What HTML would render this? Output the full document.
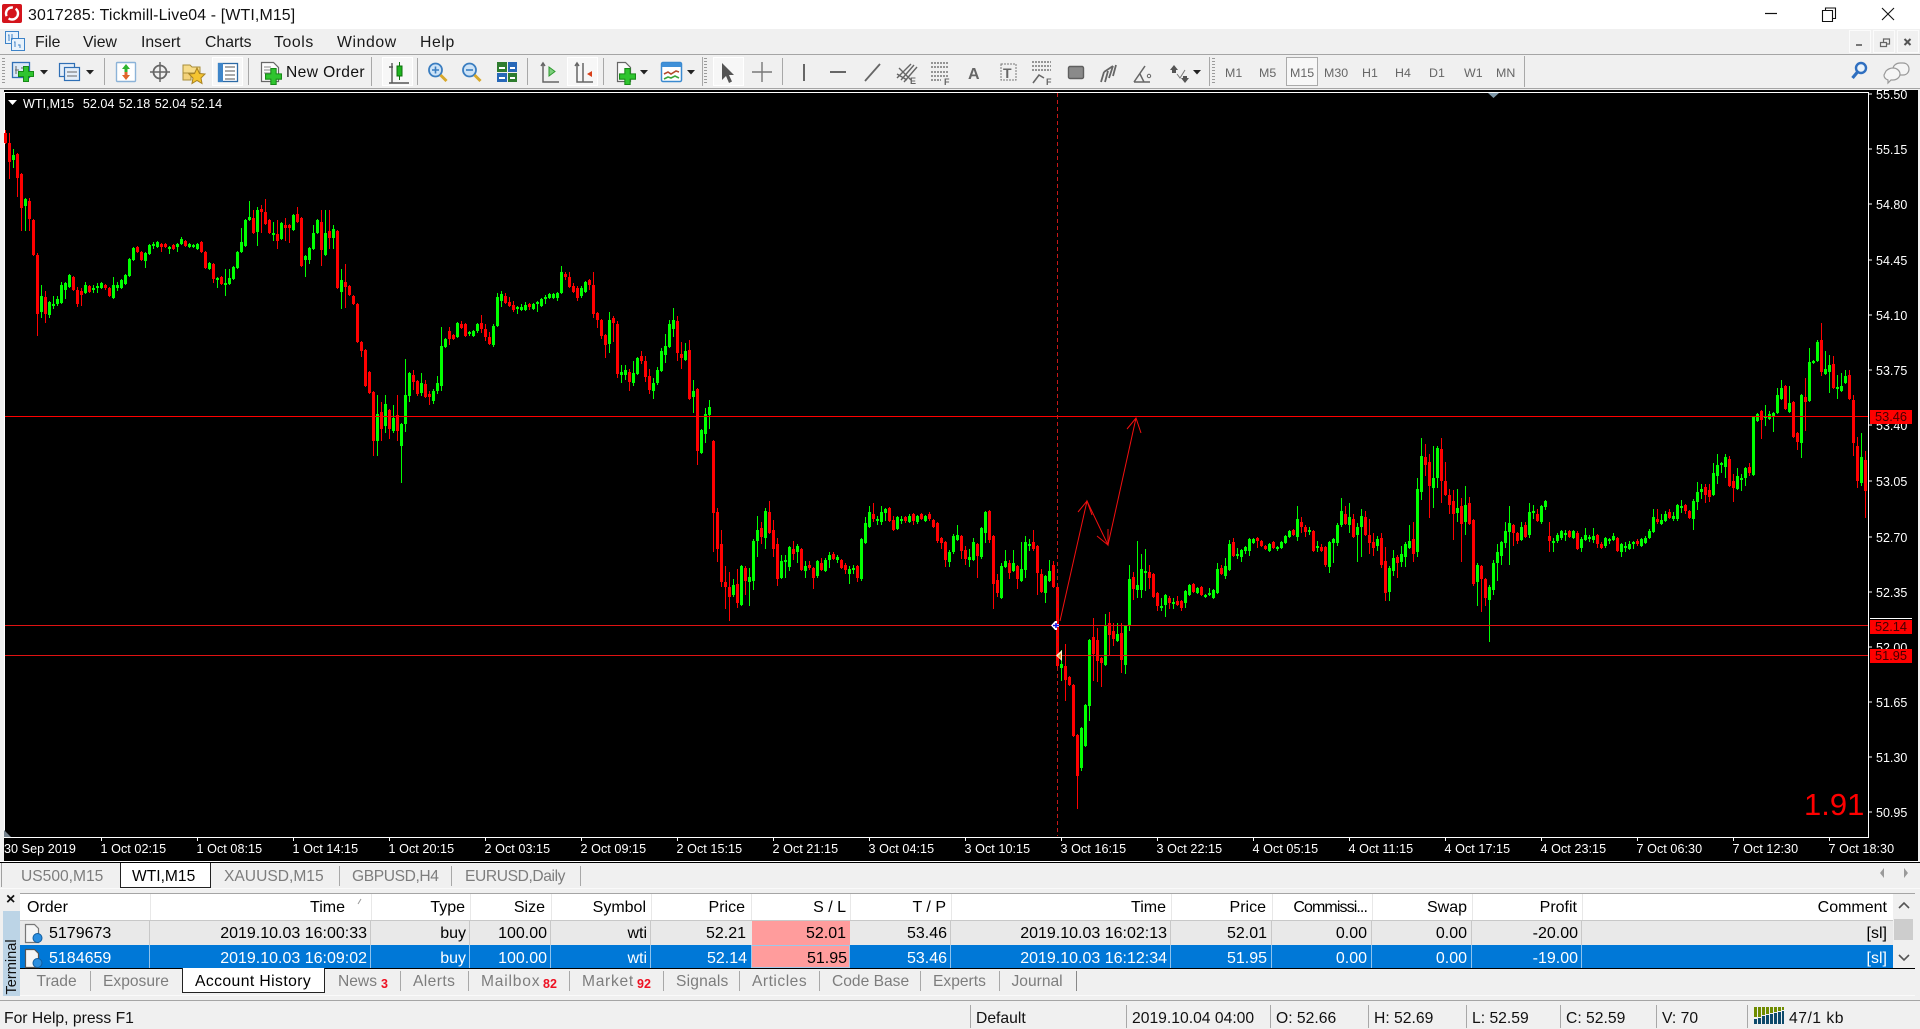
<!DOCTYPE html>
<html><head><meta charset="utf-8"><title>3017285: Tickmill-Live04 - [WTI,M15]</title>
<style>
html,body{margin:0;padding:0;width:1920px;height:1028px;overflow:hidden;background:#f0f0f0;font-family:"Liberation Sans",sans-serif;color:#000}
.b{position:absolute}
.t{position:absolute;white-space:nowrap;line-height:20px;height:20px;font-size:15.7px;margin-top:1px}
.m{font-size:15.8px;top:32px;color:#1a1a1a}
.a{font-size:12.6px;letter-spacing:.05px;color:#fff;top:838px}
.p{font-size:12.5px;color:#fff;left:1876px}
.g{color:#7d7d7d;font-size:15.6px}
.c{font-size:16px;text-align:right}
.h{top:897px}.r1{top:923px}.r2{top:948px;color:#fff}
.s{top:1008px;font-size:15.7px;color:#111}
.f{font-size:12.4px;color:#666;top:62px;font-weight:normal}
.tag{position:absolute;left:1870px;width:42px;height:14px;background:#f00;color:#400;font-size:12.8px;line-height:14px;text-align:center}
.n{color:#ee1122;font-size:12.5px;font-weight:bold}
.v{position:absolute;width:1px;background:#a8a8a8}
</style></head><body>

<!-- title bar -->
<div class="b" style="left:0;top:0;width:1920px;height:29px;background:#fff"></div>
<div class="t" style="left:28px;top:5px;font-size:15.9px;letter-spacing:.14px;color:#111">3017285: Tickmill-Live04 - [WTI,M15]</div>

<!-- menu -->
<div class="t m" style="left:35px">File</div>
<div class="t m" style="left:83px">View</div>
<div class="t m" style="left:141px">Insert</div>
<div class="t m" style="left:205px">Charts</div>
<div class="t m" style="left:274px;letter-spacing:.6px">Tools</div>
<div class="t m" style="left:337px;letter-spacing:.6px">Window</div>
<div class="t m" style="left:420px;letter-spacing:.6px">Help</div>

<!-- toolbar rows -->
<div class="b" style="left:0;top:54px;width:1920px;height:1px;background:#a5a5a5"></div>
<div class="b" style="left:0;top:88px;width:1920px;height:1px;background:#a5a5a5"></div>
<div class="b" style="left:212px;top:57px;width:31px;height:29px;background:#f7f7f7;border:1px solid #fff;box-sizing:border-box"></div>
<div class="b" style="left:382px;top:57px;width:31px;height:29px;background:#f7f7f7;border:1px solid #fff;box-sizing:border-box"></div>
<div class="b" style="left:567px;top:57px;width:31px;height:29px;background:#f7f7f7;border:1px solid #fff;box-sizing:border-box"></div>
<div class="b" style="left:713px;top:57px;width:31px;height:29px;background:#f7f7f7;border:1px solid #fff;box-sizing:border-box"></div>
<div class="b" style="left:1286px;top:57px;width:32px;height:29px;background:#f7f7f7;border:1px solid #aaa;box-sizing:border-box"></div>
<div class="t" style="left:286px;top:62px;font-size:15.6px;letter-spacing:.4px;color:#111">New Order</div>
<div class="t f" style="left:1225px">M1</div>
<div class="t f" style="left:1259px">M5</div>
<div class="t f" style="left:1290px">M15</div>
<div class="t f" style="left:1324px">M30</div>
<div class="t f" style="left:1362px">H1</div>
<div class="t f" style="left:1395px">H4</div>
<div class="t f" style="left:1429px">D1</div>
<div class="t f" style="left:1464px">W1</div>
<div class="t f" style="left:1496px">MN</div>

<!-- chart -->
<div class="b" style="left:4px;top:90px;width:1914px;height:771px;background:#000"></div>
<svg id="ch" class="b" style="left:0;top:0" width="1920" height="1028" xmlns="http://www.w3.org/2000/svg">
<g shape-rendering="crispEdges">
<path d="M4 92.5H1868.5V837.5H4.5V92" fill="none" stroke="#fff" stroke-width="1"/>
<path d="M1869 94h3M1869 149h3M1869 204h3M1869 260h3M1869 315h3M1869 370h3M1869 425h3M1869 481h3M1869 537h3M1869 592h3M1869 647h3M1869 702h3M1869 757h3M1869 812h3" stroke="#fff" stroke-width="1"/>
<path d="M101 838v3M197 838v3M293 838v3M389 838v3M485 838v3M581 838v3M677 838v3M773 838v3M869 838v3M965 838v3M1061 838v3M1157 838v3M1253 838v3M1349 838v3M1445 838v3M1541 838v3M1637 838v3M1733 838v3M1829 838v3" stroke="#fff" stroke-width="1" transform="translate(.5,0)"/>
</g>
<g id="cd" shape-rendering="crispEdges"></g>
<g shape-rendering="crispEdges">
<path d="M5 416.5H1868" stroke="#f00" stroke-width="1"/>
<path d="M5 625.5H1868M5 655.5H1868" stroke="#e01212" stroke-width="1"/>
<path d="M1057.5 93V836" stroke="#c81818" stroke-width="1" stroke-dasharray="4 3"/>
</g>
<g fill="none" stroke="#f41010" stroke-width="1">
<path d="M1060 621L1087 501L1108 545L1136 418"/>
<path d="M1078 512L1087 501L1092 515M1097 536L1108 545L1108 529M1127 429L1136 418L1141 433"/>
</g>
<path d="M1051 625.5L1055 621h2v3h2v3h-2v3h-2z" fill="#fff"/>
<path d="M1053 625.5h6M1056 623v5" stroke="#1414e0" stroke-width="1.6"/>
<path d="M1062 650v11l-6-5.5z" fill="#f6f0d0"/><path d="M1061 653v6l-3-3z" fill="#e39a2a"/>
<path d="M1488 93h11l-5.5 5z" fill="#7f98a9"/>
<path d="M4 830v7h7z" fill="#75828c"/>
<path d="M8 100h9l-4.5 5z" fill="#fff"/>
</svg>

<div class="t" style="left:23px;top:93px;font-size:12.6px;color:#fff;word-spacing:.9px">WTI,M15&nbsp; 52.04 52.18 52.04 52.14</div>

<div class="t p" style="top:84px">55.50</div>
<div class="t p" style="top:139px">55.15</div>
<div class="t p" style="top:194px">54.80</div>
<div class="t p" style="top:250px">54.45</div>
<div class="t p" style="top:305px">54.10</div>
<div class="t p" style="top:360px">53.75</div>
<div class="t p" style="top:415px">53.40</div>
<div class="t p" style="top:471px">53.05</div>
<div class="t p" style="top:527px">52.70</div>
<div class="t p" style="top:582px">52.35</div>
<div class="t p" style="top:637px">52.00</div>
<div class="t p" style="top:692px">51.65</div>
<div class="t p" style="top:747px">51.30</div>
<div class="t p" style="top:802px">50.95</div>
<div class="tag" style="top:410px">53.46</div>
<div class="b" style="left:1870px;top:618px;width:42px;height:1px;background:#fff"></div>
<div class="tag" style="top:620px">52.14</div>
<div class="tag" style="top:649px">51.95</div>
<div class="t" style="left:1804px;top:792px;font-size:31px;line-height:24px;height:24px;color:#f00">1.91</div>

<div class="t a" style="left:4px">30 Sep 2019</div>
<div class="t a" style="left:100.5px">1 Oct 02:15</div>
<div class="t a" style="left:196.5px">1 Oct 08:15</div>
<div class="t a" style="left:292.5px">1 Oct 14:15</div>
<div class="t a" style="left:388.5px">1 Oct 20:15</div>
<div class="t a" style="left:484.5px">2 Oct 03:15</div>
<div class="t a" style="left:580.5px">2 Oct 09:15</div>
<div class="t a" style="left:676.5px">2 Oct 15:15</div>
<div class="t a" style="left:772.5px">2 Oct 21:15</div>
<div class="t a" style="left:868.5px">3 Oct 04:15</div>
<div class="t a" style="left:964.5px">3 Oct 10:15</div>
<div class="t a" style="left:1060.5px">3 Oct 16:15</div>
<div class="t a" style="left:1156.5px">3 Oct 22:15</div>
<div class="t a" style="left:1252.5px">4 Oct 05:15</div>
<div class="t a" style="left:1348.5px">4 Oct 11:15</div>
<div class="t a" style="left:1444.5px">4 Oct 17:15</div>
<div class="t a" style="left:1540.5px">4 Oct 23:15</div>
<div class="t a" style="left:1636.5px">7 Oct 06:30</div>
<div class="t a" style="left:1732.5px">7 Oct 12:30</div>
<div class="t a" style="left:1828.5px">7 Oct 18:30</div>

<!-- chart tabs -->
<div class="b" style="left:0;top:861px;width:1918px;height:1px;background:#fff"></div>
<div class="b" style="left:0;top:862px;width:1920px;height:1px;background:#000"></div>
<div class="b" style="left:0;top:888px;width:1920px;height:1px;background:#fafafa"></div>
<div class="b" style="left:1px;top:863px;width:1px;height:24px;background:#a0a0a0"></div>
<div class="b" style="left:120px;top:863px;width:91px;height:25px;background:#fff;border-left:1px solid #222;border-right:1px solid #222;border-bottom:1px solid #222;box-sizing:border-box"></div>
<div class="t g" style="left:21px;top:866px">US500,M15</div>
<div class="t" style="left:132px;top:866px;font-size:15.6px">WTI,M15</div>
<div class="t g" style="left:224px;top:866px">XAUUSD,M15</div>
<div class="v" style="left:339px;top:866px;height:20px"></div>
<div class="t g" style="left:352px;top:866px;letter-spacing:-.4px">GBPUSD,H4</div>
<div class="v" style="left:451px;top:866px;height:20px"></div>
<div class="t g" style="left:465px;top:866px;letter-spacing:-.4px">EURUSD,Daily</div>
<div class="v" style="left:580px;top:866px;height:20px"></div>

<!-- terminal -->
<div class="t" style="left:6px;top:889px;font-size:16px;color:#111;font-weight:bold">×</div>
<div class="b" style="left:3px;top:911px;width:17px;height:85px;background:#bcd4e6"></div>
<div class="t" style="left:-18px;top:956px;width:60px;font-size:14.6px;transform:rotate(-90deg);color:#111;text-align:center">Terminal</div>
<div class="b" style="left:20px;top:893px;width:1895px;height:1px;background:#a5a5a5"></div>
<div class="b" style="left:20px;top:894px;width:1873px;height:26px;background:#fff"></div>
<div class="b" style="left:20px;top:920px;width:1873px;height:1px;background:#c8c8c8"></div>
<div class="b" style="left:20px;top:921px;width:1873px;height:24px;background:#e9e9e9"></div>
<div class="b" style="left:20px;top:945px;width:1873px;height:23px;background:#0078d7"></div>
<div class="b" style="left:20px;top:968px;width:1895px;height:1px;background:#000"></div>
<div class="b" style="left:752px;top:921px;width:98px;height:24px;background:#ff9c9c"></div>
<div class="b" style="left:751px;top:945px;width:99px;height:23px;background:#ff9c9c;border:1px solid #9cc8ea;box-sizing:border-box"></div>
<!-- column dividers -->
<svg class="b" style="left:0;top:0" width="1920" height="1028" shape-rendering="crispEdges">
<path d="M150.5 894v26M371.5 894v26M470.5 894v26M551.5 894v26M651.5 894v26M751.5 894v26M850.5 894v26M951.5 894v26M1171.5 894v26M1272.5 894v26M1372.5 894v26M1472.5 894v26M1582.5 894v26" stroke="#e8e8e8"/>
<path d="M149.5 921v24M370.5 921v24M469.5 921v24M550.5 921v24M650.5 921v24M950.5 921v24M1170.5 921v24M1271.5 921v24M1371.5 921v24M1471.5 921v24M1581.5 921v24" stroke="#c8c8c8"/>
<path d="M149.5 945v23M370.5 945v23M469.5 945v23M550.5 945v23M650.5 945v23M950.5 945v23M1170.5 945v23M1271.5 945v23M1371.5 945v23M1471.5 945v23M1581.5 945v23" stroke="#8fc2ec"/>
</svg>
<!-- header -->
<div class="t c h" style="left:27px">Order</div>
<div class="t c h" style="right:1575px">Time</div>
<div class="t c h" style="right:1455px">Type</div>
<div class="t c h" style="right:1375px">Size</div>
<div class="t c h" style="right:1274px">Symbol</div>
<div class="t c h" style="right:1175px">Price</div>
<div class="t c h" style="right:1074px">S / L</div>
<div class="t c h" style="right:974px">T / P</div>
<div class="t c h" style="right:754px">Time</div>
<div class="t c h" style="right:654px">Price</div>
<div class="t c h" style="right:553px;letter-spacing:-.9px">Commissi...</div>
<div class="t c h" style="right:453px">Swap</div>
<div class="t c h" style="right:343px">Profit</div>
<div class="t c h" style="right:33px">Comment</div>
<!-- row 1 -->
<div class="t c r1" style="left:49px">5179673</div>
<div class="t c r1" style="right:1553px">2019.10.03 16:00:33</div>
<div class="t c r1" style="right:1454px">buy</div>
<div class="t c r1" style="right:1373px">100.00</div>
<div class="t c r1" style="right:1273px">wti</div>
<div class="t c r1" style="right:1174px">52.21</div>
<div class="t c r1" style="right:1074px">52.01</div>
<div class="t c r1" style="right:973px">53.46</div>
<div class="t c r1" style="right:753px">2019.10.03 16:02:13</div>
<div class="t c r1" style="right:653px">52.01</div>
<div class="t c r1" style="right:553px">0.00</div>
<div class="t c r1" style="right:453px">0.00</div>
<div class="t c r1" style="right:342px">-20.00</div>
<div class="t c r1" style="right:33px">[sl]</div>
<!-- row 2 -->
<div class="t c r2" style="left:49px">5184659</div>
<div class="t c r2" style="right:1553px">2019.10.03 16:09:02</div>
<div class="t c r2" style="right:1454px">buy</div>
<div class="t c r2" style="right:1373px">100.00</div>
<div class="t c r2" style="right:1273px">wti</div>
<div class="t c r2" style="right:1173px">52.14</div>
<div class="t c r2" style="right:1073px;color:#000">51.95</div>
<div class="t c r2" style="right:973px">53.46</div>
<div class="t c r2" style="right:753px">2019.10.03 16:12:34</div>
<div class="t c r2" style="right:653px">51.95</div>
<div class="t c r2" style="right:553px">0.00</div>
<div class="t c r2" style="right:453px">0.00</div>
<div class="t c r2" style="right:342px">-19.00</div>
<div class="t c r2" style="right:33px">[sl]</div>

<!-- scrollbar -->
<div class="b" style="left:1894px;top:919px;width:19px;height:21px;background:#cdcdcd"></div>

<!-- terminal tabs -->
<div class="b" style="left:182px;top:968px;width:143px;height:25px;background:#fff;border-left:1px solid #222;border-right:1px solid #222;border-bottom:1px solid #222;box-sizing:border-box"></div>
<div class="b" style="left:20px;top:995px;width:1895px;height:1px;background:#fafafa"></div>
<div class="t g" style="left:36.5px;top:971px">Trade</div>
<div class="v" style="left:90px;top:971px;height:20px"></div>
<div class="t g" style="left:103px;top:971px">Exposure</div>
<div class="t" style="left:195px;top:971px;font-size:15.7px;letter-spacing:.42px">Account History</div>
<div class="t g" style="left:338px;top:971px">News</div><div class="t n" style="left:381px;top:973px">3</div>
<div class="v" style="left:400px;top:971px;height:20px"></div>
<div class="t g" style="left:413px;top:971px;letter-spacing:.4px">Alerts</div>
<div class="v" style="left:468px;top:971px;height:20px"></div>
<div class="t g" style="left:481px;top:971px;letter-spacing:.8px">Mailbox</div><div class="t n" style="left:543px;top:973px">82</div>
<div class="v" style="left:569px;top:971px;height:20px"></div>
<div class="t g" style="left:582px;top:971px;letter-spacing:.7px">Market</div><div class="t n" style="left:637px;top:973px">92</div>
<div class="v" style="left:663px;top:971px;height:20px"></div>
<div class="t g" style="left:676px;top:971px;letter-spacing:.2px">Signals</div>
<div class="v" style="left:739px;top:971px;height:20px"></div>
<div class="t g" style="left:752px;top:971px;letter-spacing:.5px">Articles</div>
<div class="v" style="left:819px;top:971px;height:20px"></div>
<div class="t g" style="left:832px;top:971px">Code Base</div>
<div class="v" style="left:920px;top:971px;height:20px"></div>
<div class="t g" style="left:933px;top:971px">Experts</div>
<div class="v" style="left:999px;top:971px;height:20px"></div>
<div class="t g" style="left:1011.5px;top:971px">Journal</div>
<div class="v" style="left:1076px;top:971px;height:20px;background:#888"></div>

<!-- status bar -->
<div class="b" style="left:0;top:1000px;width:1920px;height:1px;background:#a5a5a5"></div>
<div class="t s" style="left:4px">For Help, press F1</div>
<div class="v" style="left:970px;top:1005px;height:23px"></div>
<div class="t s" style="left:976px">Default</div>
<div class="v" style="left:1126px;top:1005px;height:23px"></div>
<div class="t s" style="left:1132px">2019.10.04 04:00</div>
<div class="v" style="left:1270px;top:1005px;height:23px"></div>
<div class="t s" style="left:1276px">O: 52.66</div>
<div class="v" style="left:1368px;top:1005px;height:23px"></div>
<div class="t s" style="left:1374px">H: 52.69</div>
<div class="v" style="left:1466px;top:1005px;height:23px"></div>
<div class="t s" style="left:1472px">L: 52.59</div>
<div class="v" style="left:1560px;top:1005px;height:23px"></div>
<div class="t s" style="left:1566px">C: 52.59</div>
<div class="v" style="left:1656px;top:1005px;height:23px"></div>
<div class="t s" style="left:1662px">V: 70</div>
<div class="v" style="left:1747px;top:1005px;height:23px"></div>
<div class="t s" style="left:1789px;letter-spacing:.5px">47/1 kb</div>

<!-- icons -->
<svg class="b" style="left:0;top:0" width="1920" height="1028" xmlns="http://www.w3.org/2000/svg">
<defs>
<symbol id="pl" viewBox="-8 -8 16 16" overflow="visible"><path d="M-2.5-7.5h5v5h5v5h-5v5h-5v-5h-5v-5h5z" fill="#2fc52f" stroke="#178a17" stroke-width="1"/></symbol>
</defs>
<!-- app icon -->
<rect x="2" y="4" width="20" height="19" rx="2" fill="#d4141c"/>
<circle cx="12" cy="13.5" r="6" fill="none" stroke="#fff" stroke-width="2.4" stroke-dasharray="13 3"/>
<!-- menu icon -->
<rect x="5.5" y="31.5" width="13" height="12" fill="#e8f2fb" stroke="#3d83c8"/>
<rect x="11.5" y="38.5" width="13" height="12" fill="#e8f2fb" stroke="#3d83c8"/>
<path d="M8 35h1v6M12 34v6M14 42h1v5M18 45h2v3" stroke="#3d83c8" fill="none"/>
<!-- window controls -->
<path d="M1765 13.5h12" stroke="#111" stroke-width="1.2"/>
<path d="M1822.5 10.5h10v11h-10zM1825.5 10.5v-2.5h10v10.5h-3" fill="none" stroke="#111" stroke-width="1.1"/>
<path d="M1882 8l12 12M1894 8l-12 12" stroke="#111" stroke-width="1.1"/>
<!-- MDI -->
<g fill="none" stroke="#fbfbfb"><rect x="1849.5" y="30.5" width="21" height="22"/><rect x="1873.5" y="30.5" width="21" height="22"/><rect x="1897.5" y="30.5" width="21" height="22"/></g>
<path d="M1856 45h6" stroke="#777" stroke-width="2"/>
<path d="M1880.5 42.5h6v4h-6zM1883.5 42v-3h6v5h-3" fill="none" stroke="#666" stroke-width="1.2"/>
<path d="M1904.5 39l6 6M1910.5 39l-6 6" stroke="#555" stroke-width="2"/>
<!-- grips & separators -->
<g shape-rendering="crispEdges">
<path d="M3.5 58v27M705.5 58v27M1213.5 58v27" stroke="#9b9b9b" stroke-dasharray="1 2" stroke-width="3"/>
<path d="M104.5 58v27M248.5 58v27M371.5 57v29M417.5 58v27M527.5 58v27M603.5 58v27M702.5 57v29M782.5 58v27M1209.5 57v29M1524.5 56v31" stroke="#a8a8a8"/>
</g>
<!-- new chart -->
<rect x="12.5" y="62.5" width="17" height="15" fill="#dbe9f7" stroke="#2f6fb5" stroke-width="1.3"/>
<path d="M16 66v8M15 70h4M21 68h5" stroke="#666"/>
<use href="#pl" x="18" y="66" width="16" height="16"/>
<path d="M40 70h8l-4 4.5z" fill="#222"/>
<!-- profiles -->
<rect x="59.5" y="63.5" width="15" height="13" fill="#e5eef8" stroke="#2f6fb5" stroke-width="1.2"/>
<rect x="64.5" y="67.5" width="15" height="13" fill="#e5eef8" stroke="#2f6fb5" stroke-width="1.2"/>
<path d="M67 72h10M67 76h10" stroke="#666"/>
<path d="M86 70h8l-4 4.5z" fill="#222"/>
<!-- market watch -->
<rect x="116.5" y="62.5" width="19" height="19" rx="1" fill="#fff" stroke="#8cb3d8" stroke-width="1.4"/>
<path d="M126 64l4 5h-2.5v3h-3v-3H122z" fill="#2fb52f"/>
<path d="M126 80l4-5h-2.5v-3h-3v3H122z" fill="#e0652a"/>
<!-- crosshair -->
<circle cx="160" cy="72" r="6.5" fill="none" stroke="#666" stroke-width="1.8"/>
<path d="M160 62v20M150 72h20" stroke="#666" stroke-width="1.5"/>
<!-- folder star -->
<path d="M183 65h7l2 2h8v6h-17z" fill="#f7dc8a" stroke="#a98e3a"/>
<path d="M183 73h8v7h-8z" fill="#f3d27a" stroke="#a98e3a"/>
<path d="M197 68l2.5 5.5 5.5.5-4 4 1 5.5-5-3-5 3 1-5.5-4-4 5.5-.5z" fill="#f4c430" stroke="#a98321"/>
<!-- terminal -->
<rect x="218.5" y="63.5" width="19" height="18" fill="#fff" stroke="#2c6aa6" stroke-width="1.3"/>
<rect x="218" y="63" width="5" height="19" fill="#3f86c9"/>
<path d="M225 67h10M225 71h10M225 75h10M225 79h10" stroke="#555"/>
<!-- new order -->
<path d="M261.5 62.5h12l5 5v14h-17z" fill="#fbfbfb" stroke="#666" stroke-width="1.2"/>
<path d="M264 67h7M264 70h10M264 73h8" stroke="#888"/>
<use href="#pl" x="265" y="68" width="17" height="17"/>
<!-- bar chart -->
<g transform="translate(2,0)">
<path d="M390 63v20h17M390 83l-3 0M387 67h4" fill="none" stroke="#555" stroke-width="1.4"/>
<rect x="395" y="66" width="5" height="10" fill="#1fb51f" stroke="#0d6f0d"/>
<path d="M397.5 62v4M397.5 76v4" stroke="#0d6f0d"/>
</g>
<!-- zoom in / out -->
<g transform="translate(1.5,0)">
<circle cx="434" cy="70" r="6.5" fill="#cde3f7" stroke="#3a7dc0" stroke-width="1.8"/>
<path d="M430.5 70h7M434 66.5v7" stroke="#3a7dc0" stroke-width="1.6"/>
<path d="M439 75l6 6" stroke="#d8a82c" stroke-width="3"/>
<circle cx="468" cy="70" r="6.5" fill="#cde3f7" stroke="#3a7dc0" stroke-width="1.8"/>
<path d="M464.5 70h7" stroke="#3a7dc0" stroke-width="1.6"/>
<path d="M473 75l6 6" stroke="#d8a82c" stroke-width="3"/>
</g>
<!-- tile -->
<g transform="translate(1,0)">
<rect x="496" y="62" width="10" height="10" fill="#2f7d2f"/><rect x="507" y="62" width="9" height="10" fill="#2868b8"/>
<rect x="496" y="73" width="10" height="9" fill="#2868b8"/><rect x="507" y="73" width="9" height="9" fill="#2f7d2f"/>
<path d="M498 68h6M509 68h5M498 78h6M509 78h5" stroke="#fff" stroke-width="2"/>
</g>
<!-- chart shift -->
<path d="M543 63v19h16M541 66l2-3 2 3" fill="none" stroke="#666" stroke-width="1.5"/>
<path d="M549 67l6 4.5-6 4.5z" fill="#7dcf7d" stroke="#2e9a2e"/>
<path d="M577 63v19h16M575 66l2-3 2 3M583 63v19" fill="none" stroke="#666" stroke-width="1.5"/>
<path d="M592 71l-5 3 5 3z" fill="#d9401a"/>
<!-- new chart 2 -->
<path d="M617.5 62.5h8l5 5v14h-13z" fill="#fbfbfb" stroke="#666" stroke-width="1.2"/>
<use href="#pl" x="619" y="68" width="17" height="17"/>
<path d="M640 70h8l-4 4.5z" fill="#222"/>
<!-- templates -->
<rect x="661.5" y="62.5" width="20" height="19" rx="1.5" fill="#fff" stroke="#3a8ad0" stroke-width="1.5"/>
<rect x="662" y="63" width="19" height="4" fill="#3f90d8"/>
<path d="M664 74l4-2 3 2 5-3 3 1" stroke="#b34a2b" fill="none" stroke-width="1.6"/>
<path d="M664 79l4-2 3 1 4-2 4 2" stroke="#3aa63a" fill="none" stroke-width="1.6"/>
<path d="M687 70h8l-4 4.5z" fill="#222"/>
<!-- cursor -->
<path d="M722 63v17l4-4 3 7 3-1.5-3-6.5h5z" fill="#555"/>
<!-- cross -->
<path d="M762 62v20M752 72h20" stroke="#777" stroke-width="1.4"/>
<!-- vertical/horizontal/trend -->
<path d="M804 64v17" stroke="#666" stroke-width="2"/>
<path d="M830 72h16" stroke="#666" stroke-width="2"/>
<path d="M865 81l15-17" stroke="#666" stroke-width="1.8"/>
<!-- fan E -->
<path d="M897 78l14-14M901 80l13-15M904 82l13-15M899 68l12 12M897 74l10 6" stroke="#666" stroke-width="1.4"/>
<text x="910" y="84" font-size="9" font-weight="bold" fill="#666" font-family="Liberation Sans,sans-serif">E</text>
<!-- fib lines F -->
<path d="M931 63h17M931 67h17M931 72h17M931 76h17M931 80h10" stroke="#777" stroke-width="1.5" stroke-dasharray="2 1"/>
<text x="944" y="85" font-size="9" font-weight="bold" fill="#666" font-family="Liberation Sans,sans-serif">F</text>
<!-- A -->
<text x="968" y="79" font-size="16" font-weight="bold" fill="#666" font-family="Liberation Sans,sans-serif">A</text>
<!-- T -->
<rect x="1001" y="64" width="15" height="16" fill="none" stroke="#777" stroke-dasharray="2 1"/>
<text x="1003" y="78" font-size="14" font-weight="bold" fill="#666" font-family="Liberation Sans,sans-serif">T</text>
<!-- F2 -->
<path d="M1032 62h19M1032 66h19M1032 70h19" stroke="#777" stroke-width="1.5" stroke-dasharray="2 1"/>
<path d="M1033 83l6-8 5 3" fill="none" stroke="#666" stroke-width="1.6"/>
<text x="1046" y="85" font-size="9" font-weight="bold" fill="#666" font-family="Liberation Sans,sans-serif">F</text>
<!-- rect -->
<rect x="1068.5" y="66.5" width="15" height="12" rx="1.5" fill="#8a8a8a" stroke="#5f5f5f" stroke-width="1.4"/>
<!-- zigzag -->
<path d="M1101 82l3-10M1105 82l3-11M1109 78l4-12M1113 76l3-11M1104 72l9-6" stroke="#666" stroke-width="1.8"/>
<!-- angle -->
<path d="M1134 82h16M1134 82l11-16M1140 74l4 8" fill="none" stroke="#666" stroke-width="1.5"/>
<circle cx="1149" cy="76" r="1.7" fill="none" stroke="#666"/>
<!-- arrows -->
<path d="M1170 70l4-5 4 5h-2v3h-4v-3z" fill="#555"/>
<path d="M1181 78l4 5 4-5h-2v-2h-4v2z" fill="#555"/>
<path d="M1177 74l3 4 5-8" stroke="#777" fill="none"/>
<path d="M1193 70h8l-4 4.5z" fill="#222"/>
<!-- search / chat -->
<circle cx="1861" cy="68" r="5" fill="#eaf3fb" stroke="#2f6fc0" stroke-width="2.4"/>
<path d="M1857.5 72l-5 6" stroke="#2f6fc0" stroke-width="3.2"/>
<path d="M1893 69c0-4 4-6 7-6h3c4 0 6 3 6 6s-2 6-6 6h-7z" fill="#f5f5f5" stroke="#9a9a9a" stroke-width="1.2"/>
<path d="M1886 71c2-2 4-3 7-3 4 0 7 3 7 6s-3 6-7 6h-2l-3 3v-3c-3-1-4-3-4-5z" fill="#f5f5f5" stroke="#9a9a9a" stroke-width="1.2"/>
<!-- tab scroll arrows -->
<path d="M1884 868v10l-4-5z" fill="#9a9a9a"/><path d="M1904 868v10l4-5z" fill="#9a9a9a"/>
<!-- sort mark -->
<path d="M358 904l3-5" stroke="#999"/>
<!-- order icons -->
<path d="M25.5 924.5h9l4 4v14h-13z" fill="#f5f5f5" stroke="#777" stroke-width="1.2"/><circle cx="37.5" cy="938" r="4.5" fill="#2a8ee0" stroke="#0f5da0"/>
<path d="M25.5 949.5h9l4 4v14h-13z" fill="#f5f5f5" stroke="#555" stroke-width="1.2"/><circle cx="37.5" cy="963" r="4.5" fill="#2a8ee0" stroke="#0f5da0"/>
<!-- scroll chevrons -->
<path d="M1899 908l5-5 5 5" fill="none" stroke="#555" stroke-width="1.6"/>
<path d="M1899 955l5 5 5-5" fill="none" stroke="#555" stroke-width="1.6"/>
<!-- net bars -->
<g shape-rendering="crispEdges">
<path d="M1754 1007h3v10h-3zM1758 1007h3v10h-3zM1762 1007h3v8h-3zM1766 1007h3v7h-3zM1770 1007h3v6h-3zM1774 1007h3v5h-3zM1778 1007h3v4h-3zM1782 1007h2v3h-2z" fill="#6f8c00"/>
<path d="M1754 1019h3v5h-3zM1758 1018h3v6h-3zM1762 1016h3v8h-3zM1766 1015h3v9h-3zM1770 1014h3v10h-3zM1774 1013h3v11h-3zM1778 1012h3v12h-3zM1782 1011h2v13h-2z" fill="#0d4a6b"/>
</g>
</svg>

<script>
var d="r133-142^130 r143-161^133_178 g155-159^149_167 r154-177_196 r174-207_230 g199-205_230 r201-218^198_230 r220-254 r255-313^253_335 g296-311^285_317 r297-313^291_322 g302-314^301_317 g304-305^296_308 g299-303^296_305 g285-302^282_303 g283-289^282_298 g275-286 r277-289 r290-303^287_306 r291-294^288_305 g285-292^282 r286-291 g288-289^285_292 g286-287^283_292 g283-287 r285-287_289 r288-295 g285-297^277 g285-287^282_290 g280-287 g275-283 g259-275 g248-259 r247-251 r252-259 g253-260_267 g245-253 g244-245^242_248 g242-246 r244-246_251 r244-246 g247-248_253 r245-248 g244-246_251 g239-243^237 r241-245 g244-246 g245-246 g244-248 r242-251 r252-267 g263-268 r264-278_282 g278-279_287 r277-283 g283-284^269_295 g278-283^269 g267-278 g252-267 g242-251^228 g220-245 g217-219^201 r218-232^210 g210-231^207_245 r209-211^205_232 r212-223^199 r220-232 g233-234^222_240 r234-240^220_248 g223-238 r225-227^218_240 r225-227_242 g215-229 r214-221^207 r218-265 g256-259_276 g248-259_263 g233-248^225 g220-232 r222-249^210_265 g233-254^210 r231-237^210_248 g229-237^225_248 r231-287 g280-291^269_308 r282-286^264_307 r286-294 r296-303 r304-341 r342-350_356 r350-385 r372-392 r392-440_455 g414-440^395_455 r412-428^402_440 g404-425^395_432 r410-428_438 g418-430^405_432 r415-430^395_440 "+
"g424-445_482 g395-423^359_431 g373-395_401 r375-381^370_389 r381-393_395 g383-392^373_395 r384-396^380 r394-396^391_404 g391-400^389_403 g383-390^376_393 g346-385^327_390 g339-346 r331-338^327_344 r335-338 g323-336 r324-327^321 r324-335 g332-333_335 g331-335 g324-330_332 r323-328^315_332 r329-336^324_340 r337-343^332 g326-344^324_346 g297-325^293 g294-300^291_306 r296-302^293 r302-305^297_306 r305-309^301_311 g307-308_313 g307-309^304 g305-309^302 r304-306_309 g304-308 g302-303_311 g299-305 g297-298^295_303 g294-297_298 g294-297 g293-297_300 g272-292^266 r274-276^272_279 r277-286^272 r286-291^283 r288-297^286_300 g288-295^286_297 g282-291 r280-284_289 r285-313^272_317 r313-319_327 r320-335_338 r335-344_357 g320-343^312_352 r318-322^316_341 r324-373^321_377 g372-374^365_382 g370-374^365_379 r372-381^369_390 g373-382^361_385 g358-373_374 r356-360^351_363 r361-376^356_381 r376-389^369_393 g383-390^378_398 g370-382^367_384 g351-370^348_371 g346-354^334_362 g324-346^320 g320-328^308_336 r321-352^316_360 r354-357^342_368 g351-359^343_360 r350-398^340 g391-396^380_412 r389-450_464 g430-452 g414-433^408_442 g407-414^400_428 "+
"r441-512^440_551 r512-548^508_561 r544-581^530_586 r582-586^566_608 r587-596^572_620 g585-594^579_596 r584-602^569_607 g566-604^565 r568-580^566_594 g577-581^568_605 g541-580^539_589 g530-540^516_556 r528-536^522_543 g511-537^508_548 r512-532^501 r530-548^520_556 r544-578^538_585 g561-577^555 g560-561^555_577 g547-566_570 r549-553^541_559 g546-551^544_562 r549-569_570 g566-570^561_577 r565-567^561_569 r568-577_588 g561-575_577 r563-569^558 g560-570^558 g555-559^552_567 r554-558^552_559 g557-559^555_562 r560-567 r565-569^563_573 g569-573^566_583 g568-569^565_573 r566-577_581 g539-578_580 g523-542^517 g512-526^506 r514-518^503_521 g519-520^516_524 g512-521^506_524 g509-512_520 r508-520 r520-529^516 g517-528_529 g519-520^516_523 r517-520_522 g516-521^514 r514-520_524 g516-521_523 r514-518 g516-520 r514-518^512_520 r520-526^519 r523-540^522_542 r538-542_548 r542-559_566 g552-561^550_566 g536-551^534_553 g535-539^525_540 r536-550_558 r550-558^546_564 g557-559^549_566 g542-559^538 r544-555_577 g528-556_558 g512-532^511_542 r511-539_542 r536-583_608 r580-592^574_596 g566-597^563 g561-566^550_567 r563-572^560_578 g563-570^550 r566-578_588 g569-580^542_581 g542-569^536_577 g544-545^539_550 r542-548^530_550 r546-572_594 "+
"r574-591^569 g576-592_602 g571-580^560 r565-586^561 r587-665 g664-667^650_680 r666-679^644_700 r677-684 r685-735 r735-775_808 g728-767_770 g705-745 g640-705_720 r637-653^618_680 r640-660^628_681 r658-662_686 g626-664^614_665 r623-634^612_654 r631-638^623_645 g634-640^623 r633-659^623_672 g626-664_673 g579-624^565_630 r577-588^572_599 g585-589^541_597 g569-589^554_597 g571-572^549_590 r572-577^565_588 r574-596 r593-605_610 g606-607^598_610 g595-604_616 r598-602^596_608 g602-603^598_608 r601-604^596 r601-607_610 g591-602_607 g585-594 r584-591 g588-592 r587-594_595 g595-596 g593-594^588 g590-597 g569-592^563 r568-573^565 g566-575^558_578 g544-569^540 r542-555^538 g554-555^548_558 g550-556_561 g547-550_553 g539-550_555 g539-542 r538-540_547 r541-545 r546-548 g544-550 r542-547 g547-548_550 g542-547 g536-542 g531-536 r530-534 g519-536^506_540 "+
"r522-526^517_532 r527-531^525_536 g530-531^527_534 r531-550 g546-547^541_551 r547-550^544 r547-564_566 g542-566^541_572 g539-542^538_562 g525-542^523_545 g511-524^498_526 r514-523^506 g517-524^503_532 r519-536^514 g527-534^523_561 g516-526^509_556 r517-534^511 r535-542^519_553 r542-547^533_555 g539-545^536_550 r538-564^533_567 r561-592^547_600 g568-591^566_600 g558-570^550_575 r557-562^555_577 g554-561^546_566 g544-556^542_566 g541-547^525_548 r539-553^522_561 g489-551^478_556 g456-491^438_499 r457-464^444_475 r462-485^454_517 g478-487^446_507 g448-477^446_487 r449-480^438_502 r481-494^462 r495-504^489_513 r501-513^490_539 g508-512^489_521 r506-523^498_561 g505-521^486_534 r503-523^497 r520-583_585 g565-581^563_605 r566-578_611 r579-597_605 g587-599^585_641 g563-589^560_594 g552-562^544_580 g542-555^541_564 g531-542^522_547 g523-531^506_564 r525-532_545 r533-540_543 g527-539^522 r525-536^522 g512-534^503_537 g511-512^505_518 r514-520^509 g506-521_523 g501-506_509 "+
"r536-540^522_551 g541-542^538_551 g535-540^533_542 g531-537_539 g533-534^530_540 r531-536 g531-537 r533-548^531 g539-547^537_551 g535-539^528 g537-538^535_541 g536-539^528_542 r535-543_547 r544-547^542 g538-545_547 g539-540_543 g536-539^533 r538-550 g544-551_556 g546-547^542_551 g544-548^541 g542-543_548 r541-543^539_545 g539-545 g538-542^536_543 g531-537^529 g517-531^509 r519-521^509_523 g520-523^514 g514-520^511 r512-517^509 g516-518^512_520 g505-518_520 g506-507^500_512 r505-510_513 r511-517 g501-518^499_529 g492-501^482_509 g489-491^484_498 r487-494^484_502 r490-496^484_501 g473-494^463 g465-475^454_483 g463-464^462_472 g457-466^454_477 r459-485^456 r481-487^474_501 g476-488^468 g478-479^474_490 g468-477^467_485 r467-472^463_475 g417-474 g414-420 "+
"r411-419_438 g416-417^405_425 g414-418^411 g413-416_431 g395-412^388 g388-398^380 r386-408 g403-411^386 r402-436 r433-441_449 g395-442_457 r397-401^378_430 g362-400^348 g361-362 g342-360^340 r340-371^323_375 g369-373^351 g365-371^355_392 r364-387^356 g387-388^375_398 g386-390^373 g376-382^370 r375-398^370 r400-442^395_455 r446-480^437_487 g457-482^433_485 r460-490^451_517";
var toks=d.split(/\s+/),R="",G="";
for(var i=0;i<toks.length;i++){
 var m=toks[i].match(/([rg])(\d+)-(\d+)(?:\^(\d+))?(?:_(\d+))?/);
 if(!m)continue;
 var x=4+4*i,t=+m[2],b=+m[3],wt=m[4]?+m[4]:t-1,wb=m[5]?+m[5]:b+1;
 var s="M"+(x+1)+" "+wt+"h1V"+(wb+1)+"h-1zM"+x+" "+t+"h3V"+(b+1)+"h-3z";
 if(m[1]=="r")R+=s;else G+=s;
}
document.getElementById("cd").innerHTML='<path fill="#00ff00" d="'+G+'"/><path fill="#ff0000" d="'+R+'"/>';
</script>
</body></html>
